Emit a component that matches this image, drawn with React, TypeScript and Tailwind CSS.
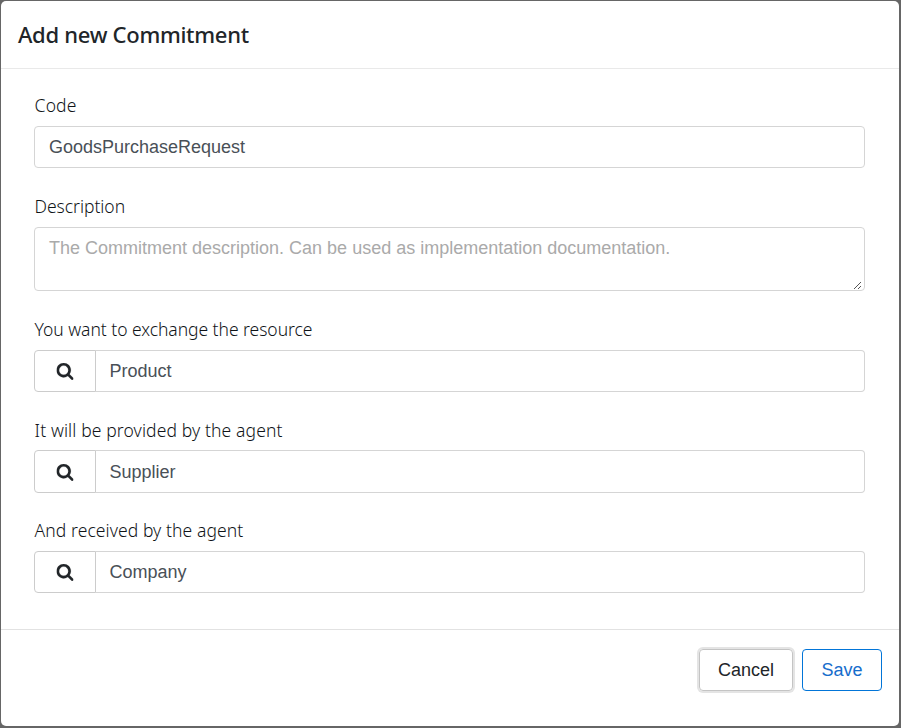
import type { ReactNode } from "react";

function SearchIcon() {
  return (
    <svg viewBox="0 128 1664 1664" className="h-[17px] w-[17px] -translate-x-[0.5px] fill-[#212529] stroke-[#212529] [stroke-width:15]" aria-hidden="true">
      <path d="M1152 832q0-185-131.5-316.5t-316.5-131.5-316.5 131.5-131.5 316.5 131.5 316.5 316.5 131.5 316.5-131.5 131.5-316.5zm512 832q0 52-38 90t-90 38q-54 0-90-38l-343-342q-179 124-399 124-143 0-273.5-55.5t-225-150-150-225-55.5-273.5 55.5-273.5 150-225 225-150 273.5-55.5 273.5 55.5 225 150 150 225 55.5 273.5q0 220-124 399l343 343q37 37 37 90z" />
    </svg>
  );
}

function Label({ children, className = "" }: { children: ReactNode; className?: string }) {
  return (
    <label className={`block h-[27px] self-start pl-[0.6px] whitespace-nowrap font-['Noto_Sans',sans-serif] text-[17.5px] leading-[27px] font-light text-[#101418] ${className}`}>
      {children}
    </label>
  );
}

function Lookup({ value, className = "h-[42px]", inputClassName = "" }: { value: string; className?: string; inputClassName?: string }) {
  return (
    <div className={`flex w-full ${className}`}>
      <button className={`flex w-[62px] shrink-0 items-center justify-center rounded-l-[4px] border border-[#ccc] ${inputClassName}`}>
        <SearchIcon />
      </button>
      <input
        defaultValue={value}
        className={`-ml-px min-w-0 flex-1 rounded-r-[4px] border border-l-0 border-[#d5d5d5] pr-3 pl-[14.4px] text-[18px] text-[#495057] outline-none ${inputClassName}`}
      />
    </div>
  );
}

export default function App() {
  return (
    <div className="h-[728px] w-[901px] bg-[#666] pt-px pr-[2px] pb-[2px] pl-px font-['Liberation_Sans',Arial,sans-serif]">
      <div className="flex h-full flex-col rounded-[5px] bg-white">
        <header className="flex h-[68px] shrink-0 items-center border-b border-[#e9e9e9] pb-[2px] pl-[17px]">
          <h1 className="font-['Noto_Sans',sans-serif] text-[22px] leading-[30px] font-medium tracking-[-0.29px] whitespace-nowrap text-[#212529]">
            Add new Commitment
          </h1>
        </header>
        <main className="flex flex-1 flex-col pr-[34px] pl-[33px]">
          <div className="flex flex-col pt-[23px]">
            <Label className="tracking-[0.15px]">Code</Label>
            <input
              defaultValue="GoodsPurchaseRequest"
              className="mt-[7px] h-[42px] rounded-[4px] border border-[#d5d5d5] px-[14px] text-[18px] text-[#495057] outline-none"
            />
          </div>
          <div className="flex flex-col pt-[25px]">
            <Label className="tracking-[-0.04px]">Description</Label>
            <div className="relative mt-[7px] flex h-[64px]">
              <textarea
                placeholder="The Commitment description. Can be used as implementation documentation."
                className="w-full resize-none rounded-[4px] border border-[#d5d5d5] px-[14px] py-[7px] text-[18px] leading-[27px] outline-none placeholder:text-[#aaa]"
              />
              <svg viewBox="0 0 7 7" className="absolute right-[4px] bottom-[2px] h-[7px] w-[7px] stroke-[#555]" aria-hidden="true">
                <path d="M0 7 7 0M4 7 7 4" />
              </svg>
            </div>
          </div>
          <div className="flex flex-col gap-[7px] pt-[25px]">
            <Label className="tracking-[-0.04px]">You want to exchange the resource</Label>
            <Lookup value="Product" />
          </div>
          <div className="flex flex-col gap-[6px] pt-[25px]">
            <Label className="tracking-[0.12px]">It will be provided by the agent</Label>
            <Lookup value="Supplier" className="h-[43px]" inputClassName="pt-px" />
          </div>
          <div className="flex flex-col gap-[7px] pt-[24px]">
            <Label className="tracking-[0.08px]">And received by the agent</Label>
            <Lookup value="Company" />
          </div>
        </main>
        <footer className="flex h-[97px] shrink-0 justify-end gap-[9px] border-t border-[#e2e2e2] pt-[19px] pr-[17px] text-[18px]">
          <button className="h-[42px] w-[94px] rounded-[4px] border border-[#c4c4c4] text-[#212529] shadow-[0_0_0_2px_#e4e4e4]">Cancel</button>
          <button className="h-[42px] w-[80px] rounded-[4px] border border-[#0275d8] text-[#166dcc]">Save</button>
        </footer>
      </div>
    </div>
  );
}
